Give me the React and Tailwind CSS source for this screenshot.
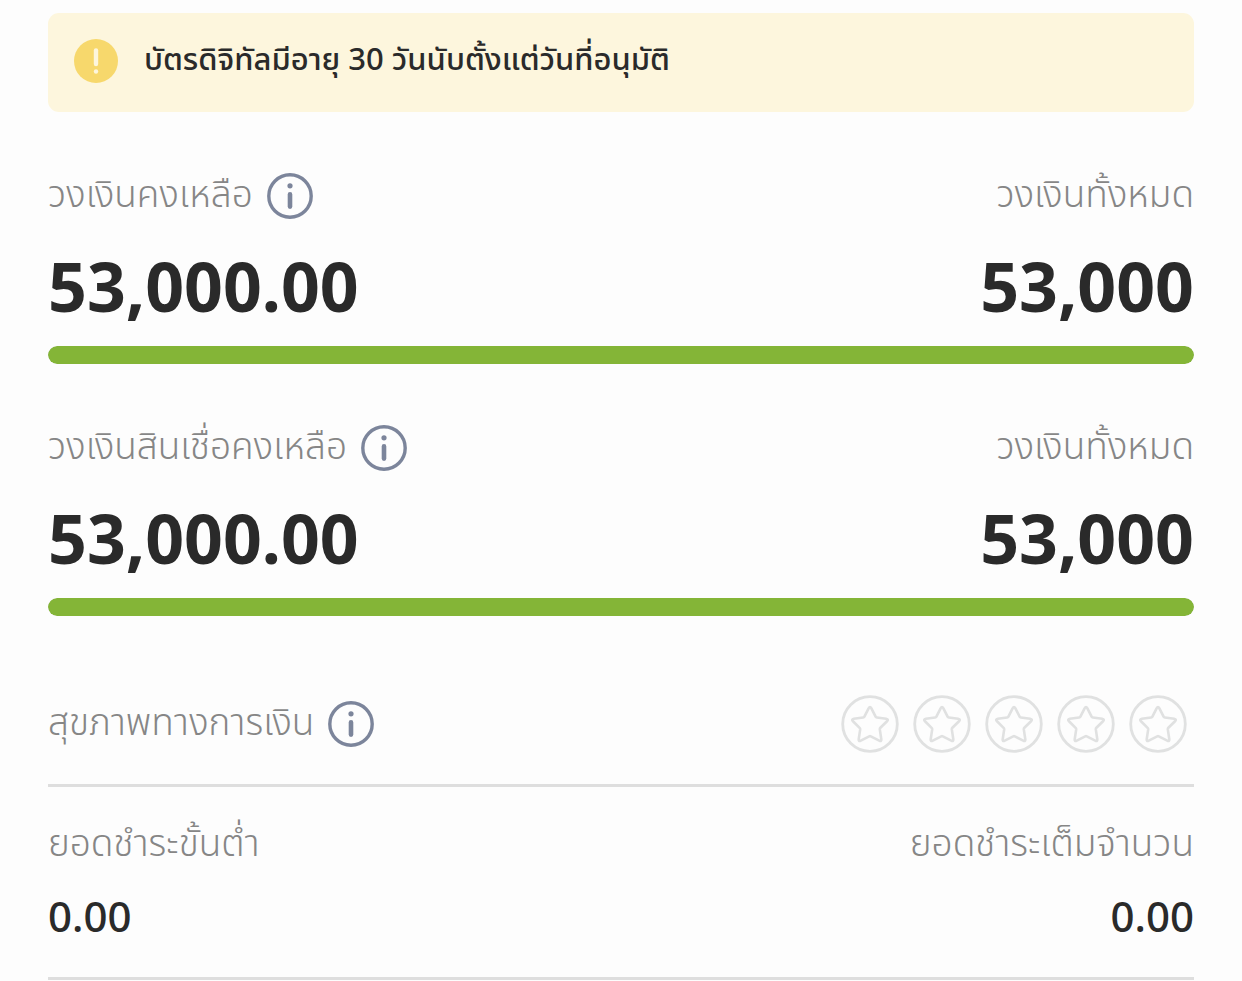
const limits = [
  { label: 'วงเงินคงเหลือ', value: '53,000.00', totalLabel: 'วงเงินทั้งหมด', total: '53,000', percent: 100 },
  { label: 'วงเงินสินเชื่อคงเหลือ', value: '53,000.00', totalLabel: 'วงเงินทั้งหมด', total: '53,000', percent: 100 },
]

const stars = [1, 2, 3, 4, 5]

const labelClass = 'pb-1.5 text-[37px] leading-[54px] font-light text-[#868686]'
const amountClass = 'pt-3 text-[42px] leading-[58px] font-medium text-[#2a2a2a]'

function InfoButton({ label }) {
  return (
    <button type="button" aria-label={label} className="size-[46px] shrink-0 rounded-full text-[#7c859b]">
      <svg viewBox="0 0 46 46" className="size-full" fill="none" stroke="currentColor" aria-hidden="true">
        <circle cx="23" cy="23" r="21.2" strokeWidth="3.4" />
        <circle cx="23" cy="12.8" r="2.6" fill="currentColor" stroke="none" />
        <path d="M23 21.4v12.2" strokeWidth="4.6" strokeLinecap="round" />
      </svg>
    </button>
  )
}

function LabelWithInfo({ children }) {
  return (
    <div className="flex items-center gap-[14px]">
      <span className={labelClass}>{children}</span>
      <InfoButton label={children} />
    </div>
  )
}

function LimitSection({ item }) {
  return (
    <section className="pb-[54px]">
      <div className="flex items-center justify-between">
        <LabelWithInfo>{item.label}</LabelWithInfo>
        <span className={labelClass}>{item.totalLabel}</span>
      </div>
      <div className="flex items-center justify-between py-4 text-[68px] leading-[88px] font-bold text-[#2a2a2a]">
        <span>{item.value}</span>
        <span>{item.total}</span>
      </div>
      <div
        role="progressbar"
        aria-label={item.label}
        aria-valuenow={item.percent}
        className="h-[18px] overflow-hidden rounded-full bg-[#e0e0e0]"
      >
        <div className="h-full rounded-full bg-[#84b537]" style={{ width: `${item.percent}%` }} />
      </div>
    </section>
  )
}

function StarBadge() {
  return (
    <svg viewBox="0 0 58 58" className="size-[58px]" fill="none" stroke="currentColor" aria-hidden="true">
      <circle cx="29" cy="29" r="27.3" strokeWidth="2.8" />
      <path
        d="M27.6 13.3q1.4-2.6 2.8 0l4.2 8.3q.4.8 1.3.9l9.3 1.3q2.7.5.8 2.5l-6.6 6.5q-.7.7-.6 1.6l1.5 9.8q.3 2.7-2.1 1.5l-8.4-4.4q-.8-.4-1.6 0l-8.4 4.4q-2.4 1.2-2.1-1.5l1.5-9.8q.1-.9-.6-1.6l-6.6-6.5q-1.9-2 .8-2.5l9.3-1.3q.9-.1 1.3-.9z"
        strokeWidth="2.6"
        strokeLinejoin="round"
      />
    </svg>
  )
}

export default function App() {
  return (
    <main className="min-h-screen bg-[#fdfdfd] px-12 pt-[13px] font-['Noto_Sans','Noto_Sans_Thai',sans-serif]">
      <div role="status" className="flex items-center gap-[26px] rounded-[11px] bg-[#fdf6dd] px-[26px] pt-[18px] pb-[21px]">
        <svg viewBox="0 0 44 44" className="size-11 shrink-0" aria-hidden="true">
          <circle cx="22" cy="22" r="22" fill="#f7d86c" />
          <path d="M22 11.5V25" stroke="#fdf6dd" strokeWidth="4.4" strokeLinecap="round" />
          <circle cx="22" cy="32.5" r="2.2" fill="#fdf6dd" />
        </svg>
        <p className="pb-1.5 text-[31px] leading-[54px] font-medium text-[#2a2a2a]">
          บัตรดิจิทัลมีอายุ 30 วันนับตั้งแต่วันที่อนุมัติ
        </p>
      </div>

      <div className="pt-[54px]">
        {limits.map((item) => (
          <LimitSection key={item.label} item={item} />
        ))}
      </div>

      <section className="flex items-center justify-between border-b-[3px] border-[#dedede] pt-6 pb-[30px]">
        <LabelWithInfo>สุขภาพทางการเงิน</LabelWithInfo>
        <div role="img" aria-label="0 / 5" className="flex gap-[14px] pr-[7px] text-[#e0e1e1]">
          {stars.map((star) => (
            <StarBadge key={star} />
          ))}
        </div>
      </section>

      <dl className="flex justify-between border-b-[3px] border-[#dedede] pt-7 pb-8">
        <div>
          <dt className={labelClass}>ยอดชำระขั้นต่ำ</dt>
          <dd className={amountClass}>0.00</dd>
        </div>
        <div className="text-right">
          <dt className={labelClass}>ยอดชำระเต็มจำนวน</dt>
          <dd className={amountClass}>0.00</dd>
        </div>
      </dl>
    </main>
  )
}
